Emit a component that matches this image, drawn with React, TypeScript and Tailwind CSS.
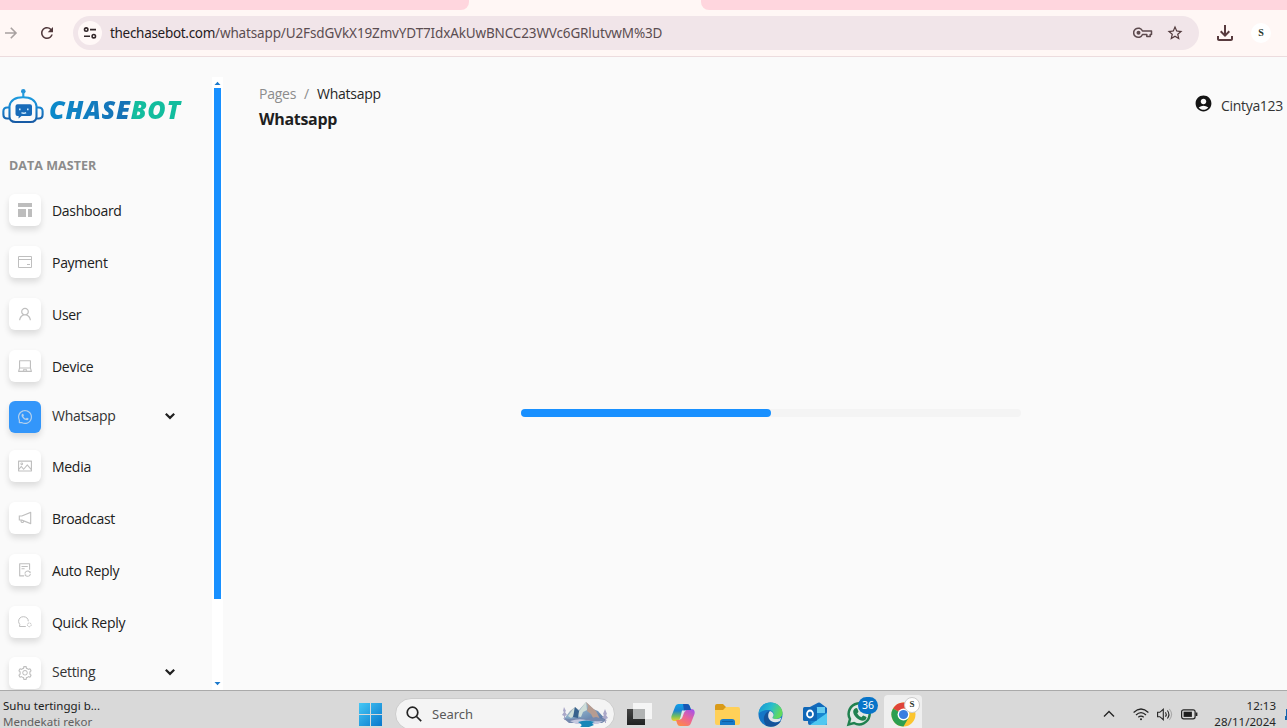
import type { ReactNode } from "react";
import {
  AiOutlineUser,
  AiOutlineLaptop,
  AiOutlineWhatsApp,
  AiOutlinePicture,
  AiOutlineNotification,
  AiOutlineFileSync,
  AiOutlineSetting,
} from "react-icons/ai";
import { MdAccountCircle, MdStarOutline, MdOutlineFileDownload, MdRefresh } from "react-icons/md";

function KeyIcon() {
  return (
    <svg className="ml-auto h-[12px] w-[20px]" viewBox="0 0 20 12" fill="none" stroke="#5d4a4e" strokeWidth="1.5">
      <path d="M9.500 4h9v3.500h-1.300v2h-3.400v-2H9.500A4.600 4.600 0 1 1 9.500 4Z" strokeLinejoin="round" />
      <circle cx="5.500" cy="5.800" r="2" fill="#5d4a4e" stroke="none" />
    </svg>
  );
}

function BrowserChrome() {
  return (
    <header className="flex h-[57px] shrink-0 flex-col border-b border-[#ecdcde] bg-[#fff7f5]">
      <div className="flex h-[10px] justify-between">
        <div className="w-[469px] rounded-br-[8px] bg-[#ffd6de]" />
        <div className="w-[586px] rounded-bl-[8px] bg-[#ffd6de]" />
      </div>
      <div className="flex h-[46px] items-center">
        <svg className="h-[14px] w-[18px] shrink-0" viewBox="0 0 18 14" fill="none" stroke="#a8a1a0" strokeWidth="1.6">
          <path d="M5 7h11M10.8 1.8 16 7l-5.2 5.2" />
        </svg>
        <MdRefresh className="ml-[20px] h-[18px] w-[18px] shrink-0 text-[#51393c]" />
        <div className="ml-[17px] flex h-[34px] w-[1126px] shrink-0 items-center rounded-full bg-[#f1e5e9] pl-[5px] pr-[15px]">
          <div className="flex h-6 w-6 items-center justify-center rounded-full bg-[#fff8f7]">
            <svg className="h-[14px] w-[14px]" viewBox="0 0 14 14" fill="none" stroke="#33282a" strokeWidth="1.6">
              <circle cx="3.2" cy="3.6" r="1.7" />
              <path d="M7 3.6h6M1 10.2h6" />
              <circle cx="10.8" cy="10.2" r="1.7" />
            </svg>
          </div>
          <p className="ml-[8px] w-[560px] whitespace-nowrap font-['Noto_Sans','Open_Sans',sans-serif] text-[13.5px] leading-[18px] tracking-[-0.14px] text-[#5b4d51]">
            <span className="tracking-[-0.3px] text-[#251b1e]">thechasebot.com</span>/whatsapp/U2FsdGVkX19ZmvYDT7IdxAkUwBNCC23WVc6GRlutvwM%3D
          </p>
          <KeyIcon />
          <MdStarOutline className="ml-[13px] h-[18px] w-[18px] text-[#51393c]" />
        </div>
        <MdOutlineFileDownload className="ml-[14px] h-[24px] w-[24px] shrink-0 text-[#583b3e]" />
        <div className="ml-[14px] flex h-5 w-5 shrink-0 items-center justify-center rounded-full bg-white pb-[2px] font-['Liberation_Serif',serif] text-[10px] font-bold text-[#28352b]">
          S
        </div>
      </div>
    </header>
  );
}

function Logo() {
  return (
    <div className="flex h-[37px] items-center">
      <svg className="h-[37px] w-[43px] shrink-0" viewBox="0 0 43 37" fill="none" stroke="url(#botBlue)" strokeWidth="2.1">
        <defs>
          <linearGradient id="botBlue" gradientUnits="userSpaceOnUse" x1="0" y1="0" x2="0" y2="36">
            <stop offset="0" stopColor="#22aee9" />
            <stop offset=".55" stopColor="#1784d0" />
            <stop offset="1" stopColor="#17559f" />
          </linearGradient>
        </defs>
        <circle cx="22.300" cy="3.300" r="2.300" fill="#2492d6" stroke="none" />
        <path d="M22.300 4v5" stroke="#249bdc" />
        <path d="M8.500 18C9.500 12.500 14.500 9.300 22 9.300s12.500 3.200 13.500 8.700v10.500q0 5.500-6 5.500H14.500q-6 0-6-5.500Z" />
        <path d="M8.500 19.500H6.200q-3.800 0-3.800 3.800v3.200q0 4 3.800 4h2.300M35.500 19.500h2.300q3.800 0 3.800 3.800v3.200q0 4-3.800 4h-2.300" />
        <path d="M16.500 16.300H29q2 0 2 2v7.700q0 2-2 2h-8.500l-3 2.500.2-2.500h-1.200q-2 0-2-2v-7.700q0-2 2-2Z" fill="#176bb9" stroke="none" />
        <path d="M18.800 20.500v1.800M26.800 20.500v1.800M20.500 24.700q2.300 1.300 4.600 0" stroke="#d4efff" strokeWidth="1.500" />
      </svg>
      <span className="ml-[5px] mt-[4px] w-[140px] bg-gradient-to-r from-[#0a8bcb] from-0% via-[#1670b5] via-57% to-[#12bd9e] to-60% bg-clip-text pr-[4px] font-['Open_Sans',sans-serif] text-[25px] font-extrabold italic leading-[34px] tracking-[0.7px] text-transparent">
        CHASEBOT
      </span>
    </div>
  );
}

function CardIcon() {
  return (
    <svg className="h-[12px] w-[14px]" viewBox="0 0 14 12" fill="none" stroke="#bfbfbf">
      <path d="M.5.500h13v11H.5zM.5 3.500h13M9 8.500h3" />
    </svg>
  );
}

function ChatSettingIcon() {
  return (
    <svg className="h-[12px] w-[14px]" viewBox="0 0 14 12" fill="none" stroke="#bfbfbf">
      <path d="M10.300 5.300C10.300 2.500 8.300.700 5.400.700S.600 2.600.600 5.300c0 1.300.5 2.300 1.200 3.100L1.500 10.500H7.800" />
      <circle cx="11.300" cy="8.800" r="1.900" strokeDasharray="1.500 .6" />
    </svg>
  );
}

type NavItem = { label: string; icon: ReactNode; row: string; text?: string; active?: boolean; open?: boolean };

const nav: NavItem[] = [
  {
    label: "Dashboard",
    row: "mb-5",
    icon: (
      <svg className="h-[14px] w-[14px]" viewBox="0 0 14 14" fill="#bdbdbd">
        <path d="M0 0h14v4H0zM0 6h8v8H0zM10 6h4v8h-4z" />
      </svg>
    ),
  },
  { label: "Payment", row: "mb-5", icon: <CardIcon /> },
  { label: "User", row: "mb-5", icon: <AiOutlineUser /> },
  { label: "Device", row: "mb-[19px]", icon: <AiOutlineLaptop /> },
  { label: "Whatsapp", row: "mb-[17px]", icon: <AiOutlineWhatsApp />, active: true, open: true, text: "pb-[3px] text-[#333]" },
  { label: "Media", row: "mb-5", icon: <AiOutlinePicture /> },
  { label: "Broadcast", row: "mb-5", icon: <AiOutlineNotification /> },
  { label: "Auto Reply", row: "mb-5", icon: <AiOutlineFileSync /> },
  { label: "Quick Reply", row: "mb-[19px]", icon: <ChatSettingIcon /> },
  { label: "Setting", row: "", icon: <AiOutlineSetting />, open: true, text: "pb-[3px] text-[#333]" },
];

function Sidebar() {
  return (
    <aside className="flex w-[212px] shrink-0 flex-col overflow-hidden pt-[31px]">
      <div className="pl-[1px]">
        <Logo />
      </div>
      <h6 className="ml-[9px] mt-[31px] h-[20px] text-[12.5px] font-bold leading-[20px] tracking-[0.05px] text-[#8c8c8c]">DATA MASTER</h6>
      <nav className="mt-[18px] flex flex-col pl-[9px]">
        {nav.map((item) => (
          <a key={item.label} className={"flex h-8 shrink-0 items-center " + item.row}>
            <span
              className={
                "flex h-8 w-8 items-center justify-center rounded-[6px] text-[16px] shadow-[0_4px_6px_rgba(0,0,0,0.12)] " +
                (item.active ? "bg-[#3396fa] text-[#b4d0ec]" : "bg-white text-[#bfbfbf]")
              }
            >
              {item.icon}
            </span>
            <span className={"ml-[11px] w-[111px] text-[14px] leading-[20px] tracking-[-0.29px] " + (item.text ?? "pt-[1px] text-[#202020]")}>
              {item.label}
            </span>
            {item.open && (
              <svg className="mb-[3px] ml-[2px] h-[8px] w-[10px]" viewBox="0 0 10 8" fill="none" stroke="#202020" strokeWidth="2.2">
                <path d="m.8 1.800 4.200 4.100 4.200-4.100" />
              </svg>
            )}
          </a>
        ))}
      </nav>
    </aside>
  );
}

function Scrollbar() {
  return (
    <div className="flex w-[11px] shrink-0 flex-col items-center pt-5">
      <div className="flex h-[613px] w-full flex-col items-center bg-white">
        <svg className="h-[11px] w-[7px] shrink-0" viewBox="0 0 7 11" fill="#1b79cc">
          <path d="M.5 8 3.500 4.700 6.500 8z" />
        </svg>
        <div className="h-[511px] w-[7px] shrink-0 bg-[#1890ff]" />
        <svg className="mt-auto h-[11px] w-[7px] shrink-0" viewBox="0 0 7 11" fill="#1b79cc">
          <path d="M.5 3h6L3.500 6.300z" />
        </svg>
      </div>
    </div>
  );
}

function MainContent() {
  return (
    <main className="flex min-w-0 flex-1 flex-col pl-9">
      <div className="flex h-[84px] justify-between">
        <div className="pt-[26px]">
          <div className="flex text-[14px] leading-[22px] tracking-[-0.25px] text-[#8c8c8c]">
            <span>Pages</span>
            <span className="mx-[8px]">/</span>
            <span className="text-[#262626]">Whatsapp</span>
          </div>
          <h1 className="mt-[3px] text-[16px] font-bold leading-[22px] tracking-[-0.3px] text-[#1f1f1f]">Whatsapp</h1>
        </div>
        <div className="mr-[4px] flex items-start pt-[37px]">
          <MdAccountCircle className="h-[19px] w-[19px] text-[#141414]" />
          <span className="ml-[8px] mt-[1px] text-[14px] leading-[22px] tracking-[-0.3px] text-[#333]">Cintya123</span>
        </div>
      </div>
      <div className="ml-[262px] mt-[268px] h-2 w-[500px] rounded-full bg-[#f4f4f4]">
        <div className="h-2 w-1/2 rounded-full bg-[#1890ff]" />
      </div>
    </main>
  );
}

function SearchArt() {
  return (
    <svg className="ml-auto h-[26px] w-[48px]" viewBox="0 0 48 26">
      <defs>
        <linearGradient id="peak" x1="0" y1="0" x2="1" y2="1">
          <stop offset="0" stopColor="#e9c8ad" />
          <stop offset=".45" stopColor="#8aacc7" />
          <stop offset="1" stopColor="#526fa0" />
        </linearGradient>
      </defs>
      <path d="M3 18 9 10l5-4 4 3 7-8 7 7 5 2 8 9z" fill="url(#peak)" />
      <path d="m15 15 4-6 6-8 1 8-4 2-2 5zM7 15l6-8 1 7-4 3z" fill="#ceded9" />
      <path d="m25 1 2 4-1 5 4 3 2 4 7 1-4-8z" fill="#b69c91" />
      <path d="m14 6 4 4-1 7-5-1z" fill="#36628d" />
      <path d="m2 17 7 1 9-1 8 1 9-2 11 3-5 3H8z" fill="#7589ae" />
      <path d="M9 20q9-3 16-1t17 1l-5 3H15z" fill="#c4c8df" />
      <path d="M17 21q8-3 17 0-5 1-1 3l-5 2h-9q4-2-2-5z" fill="#1687b8" />
      <path d="m3 6 2 4-1 1 2 3-2 1v4H3v-4l-2-1 2-3-1-1zM44 8l2 5-1 1 2 3-2 1v4h-1v-4l-3-1 2-3-1-1z" fill="#aaa8c8" />
    </svg>
  );
}

function CopilotIcon() {
  return (
    <svg className="h-6 w-6" viewBox="0 0 24 24">
      <defs>
        <linearGradient id="copA" x1="0" y1="0" x2="0" y2="1">
          <stop offset="0" stopColor="#12a0e8" />
          <stop offset=".4" stopColor="#1c84d0" />
          <stop offset=".72" stopColor="#74bf5c" />
          <stop offset="1" stopColor="#f0cf2d" />
        </linearGradient>
        <linearGradient id="copB" x1=".8" y1="0" x2=".2" y2="1">
          <stop offset="0" stopColor="#a653e8" />
          <stop offset=".5" stopColor="#ec6594" />
          <stop offset="1" stopColor="#ff8a45" />
        </linearGradient>
      </defs>
      <path d="M7.500 1H16q2 0 2.700 2L20 7h-4q-2 0-2.700 2L11 16q-.8 2-3 2H4Q-.5 18 .5 13L4 4q1-3 3.500-3Z" fill="url(#copA)" />
      <path d="M16.500 23H9q-2 0-2.700-2L5 17h3q2 0 2.700-2L13 8q.8-2 3-2h4q4.500 0 3.500 5L20 20q-1 3-3.500 3Z" fill="url(#copB)" />
      <path d="M12 1h4q2 0 2.700 2L20 7h-4q-2 0-2.700 2z" fill="#1857b4" />
      <path d="M11 7.500h4.500q-2 .5-2.600 2.500l-1.600 4.500q-.7 2-2.800 2H8q1-.5 1.500-2.500z" fill="#dde6ed" />
    </svg>
  );
}

function FolderIcon() {
  return (
    <svg className="h-6 w-[25px]" viewBox="0 0 25 24">
      <path d="M0 3q0-2 2-2h6l3 3h12v8H0z" fill="#d99a18" />
      <path d="M0 7h8l3-3h12q2 0 2 2v14q0 2-2 2H2q-2 0-2-2z" fill="#ffd058" />
      <path d="M5 22v-3q0-3 3-3h9q3 0 3 3v3z" fill="#1579c8" />
      <path d="M7 18h11v1H7z" fill="#0d5fa5" />
    </svg>
  );
}

function EdgeIcon() {
  return (
    <svg className="h-[25px] w-[25px]" viewBox="0 0 25 25">
      <defs>
        <linearGradient id="edgeTop" x1="0" y1="0" x2="1" y2=".35">
          <stop offset="0" stopColor="#1492d5" />
          <stop offset=".55" stopColor="#29bdcd" />
          <stop offset="1" stopColor="#62d95d" />
        </linearGradient>
      </defs>
      <circle cx="12.500" cy="12.500" r="12" fill="#1476c7" />
      <path d="M.5 12C1 4.500 6 .5 12.500.5 20 .5 25 6 24.500 11.500c-.4 4-4 5.500-7.500 5.500-2.500 0-3-1-2-2.500 2-3-.5-6.500-5-6.500-4.500 0-8.500 2-9.500 4Z" fill="url(#edgeTop)" />
      <path d="M8.500 24C3.500 18 6 10 12 9c-2 2-2.500 6 0 9 2.800 3.200 7 3 11 1-3 5-8.500 7-14.500 5Z" fill="#155399" />
      <path d="M12 9c3 1 4.500 3.500 3 5.500-.8 1.200-.5 2 .8 2.300 2.200.8 5.200 0 7.500-1.300L22 19c-4 2-8 1.700-10.500-1.500C9.500 15 10 11 12 9Z" fill="#e0e4e7" />
    </svg>
  );
}

function OutlookIcon() {
  return (
    <svg className="h-6 w-6" viewBox="0 0 24 24">
      <path d="M5 6 15 .8q1-.5 2 0L24 6v15q0 2-2 2H7q-2 0-2-2z" fill="#126abb" />
      <path d="M8 5h14v12H8z" fill="#1687d1" />
      <path d="M14 5h8v6h-8z" fill="#65cbef" />
      <path d="m6 12 9 5 9-7v12q0 1-1 1H8z" fill="#1684ce" />
      <path d="m7 23 17-12v10q0 2-2 2z" fill="#50c8f1" />
      <rect y="5" width="14" height="14" rx="1.500" fill="#0f67b7" />
      <ellipse cx="7" cy="12" rx="3" ry="3.500" fill="none" stroke="#fff" strokeWidth="1.800" />
    </svg>
  );
}

function WhatsAppIcon() {
  return (
    <svg className="h-[26px] w-[26px]" viewBox="0 0 26 26">
      <path d="M2.500 23.500 4 18A10.500 10.500 0 1 1 8 22Z" fill="#e2e9e4" stroke="#20814f" strokeWidth="2.500" />
      <path d="m8.300 8 1.700-1q1-.2 1.400.8l1 2.400q.2.800-.4 1.300l-.8.900q1.500 2.800 4.200 3.800l1.200-1.300q.5-.5 1.200-.2l2.200 1.100q.7.300.5 1.200-.8 2.800-3.500 2.800C12 19.500 7 14.500 7.200 10.500q0-1.500 1.100-2.500Z" fill="#20814f" />
    </svg>
  );
}

function ChromeIcon() {
  return (
    <svg className="h-[25px] w-[25px]" viewBox="0 0 24 24">
      <circle cx="12" cy="12" r="11.500" fill="#fbc52f" />
      <path d="M12 12 2 6.200A11.500 11.500 0 0 1 22 6.200L12 6.500z" fill="#df4439" />
      <path d="M2 6.200A11.500 11.500 0 0 0 12 23.500l5-8.700L12 12z" fill="#2c9f50" />
      <circle cx="12" cy="12" r="5.700" fill="#fff" />
      <circle cx="12" cy="12" r="4.400" fill="#397de0" />
    </svg>
  );
}

function Taskbar() {
  return (
    <footer className="flex h-[38px] shrink-0 overflow-hidden border-t border-[#aaa] bg-[#d9d9d9] font-['Noto_Sans','Open_Sans',sans-serif]">
      <div className="w-[359px] shrink-0 whitespace-nowrap pl-[3px] pt-[7px] text-[11.5px] leading-[16px]">
        <div className="tracking-[0.02px] text-[#202020]">Suhu tertinggi b...</div>
        <div className="text-[#606060]">Mendekati rekor</div>
      </div>
      <svg className="mt-[12px] h-[23px] w-[23px] shrink-0" viewBox="0 0 23 23">
        <defs>
          <linearGradient id="windowsBlue" x1="0" y1="0" x2="1" y2="1" gradientUnits="objectBoundingBox">
            <stop offset="0" stopColor="#46c8f5" />
            <stop offset="1" stopColor="#0877cc" />
          </linearGradient>
        </defs>
        <path d="M0 0h11v11H0zM12 0h11v11H12zM0 12h11v11H0zM12 12h11v11H12z" fill="url(#windowsBlue)" />
      </svg>
      <div className="ml-[13px] mt-[7px] flex h-[32px] w-[220px] shrink-0 items-center rounded-full border border-[#ccc] bg-[#f4f4f4] pl-[10px] pr-[5px]">
        <svg className="h-4 w-4" viewBox="0 0 16 16" fill="none" stroke="#242424" strokeWidth="1.700">
          <circle cx="6.500" cy="6.500" r="5.300" />
          <path d="m10.500 10.500 4.700 4.700" />
        </svg>
        <span className="ml-[10px] pt-[2px] text-[13px] text-[#595959]">Search</span>
        <SearchArt />
      </div>
      <div className="ml-[12px] mt-[12px] flex shrink-0">
        <svg className="h-6 w-[25px]" viewBox="0 0 25 24">
          <defs>
            <linearGradient id="paneDark" x1="0" y1="0" x2="0" y2="1">
              <stop offset="0" stopColor="#454545" />
              <stop offset="1" stopColor="#202222" />
            </linearGradient>
          </defs>
          <path d="M0 6h18v16H0z" fill="url(#paneDark)" />
          <path d="M6 0h19v16H6z" fill="#f5f5f5" />
          <path d="M6 6h12v10H6z" fill="#b1b3b3" />
        </svg>
        <div className="ml-[19px]"><CopilotIcon /></div>
        <div className="ml-[20px]"><FolderIcon /></div>
        <div className="-mt-px ml-[18px]"><EdgeIcon /></div>
        <div className="-mt-px ml-[20px]"><OutlookIcon /></div>
        <div className="relative -mt-[2px] ml-[19px]">
          <WhatsAppIcon />
          <span className="absolute -top-[4px] left-[12px] flex h-[17px] w-[20px] items-center justify-center rounded-full bg-[#0874c8] text-[10.5px] text-white">36</span>
        </div>
      </div>
      <div className="relative ml-[12px] mt-[4px] flex h-[37px] w-[38px] shrink-0 rounded-[4px] bg-[#efefef] pl-[7px] pt-[7px]">
        <ChromeIcon />
        <span className="absolute left-[20px] top-[2px] flex h-[16px] w-[16px] items-center justify-center rounded-full border border-[#ccc] bg-white font-['Liberation_Serif',serif] text-[9px] font-bold text-[#29332c]">S</span>
      </div>
      <div className="ml-auto flex shrink-0">
        <svg className="mt-[19px] h-[8px] w-[12px]" viewBox="0 0 12 8" fill="none" stroke="#252525" strokeWidth="1.400">
          <path d="m1 6.500 5-5 5 5" />
        </svg>
        <svg className="ml-[18px] mt-[17px] h-[13px] w-[16px]" viewBox="0 0 16 13" fill="none" stroke="#252525" strokeWidth="1.200">
          <path d="M.6 4.500q7.400-7 14.800 0M3 7q5-4.800 10 0M5.300 9.300q2.700-2.500 5.400 0" />
          <circle cx="8" cy="11.300" r="1" fill="#252525" stroke="none" />
        </svg>
        <svg className="ml-[8px] mt-[17px] h-[13px] w-[16px]" viewBox="0 0 16 13" fill="none" stroke="#252525" strokeWidth="1.100">
          <path d="M.6 4.300h2.200l3.500-3v10.400l-3.500-3H.6zM8.500 4.300q1.500 2.200 0 4.400M10.400 2.500q3 4 0 8" />
          <path d="M12.300 1q4.600 5.500 0 11" stroke="#aaa" />
        </svg>
        <svg className="ml-[8px] mt-[18px] h-[11px] w-[17px]" viewBox="0 0 17 11" fill="none" stroke="#252525" strokeWidth="1.200">
          <rect x=".6" y=".8" width="13.500" height="9" rx="2" />
          <path d="M15.500 3.500v3.500" strokeWidth="1.800" />
          <rect x="2.600" y="2.700" width="8.300" height="5.200" fill="#1e1e1e" stroke="none" />
        </svg>
        <div className="mt-[7px] w-[78px] whitespace-nowrap text-right text-[11.5px] leading-[16px] text-[#252525]">
          <div>12:13</div>
          <div className="tracking-[0.05px]">28/11/2024</div>
        </div>
        <svg className="ml-[9px] mt-[18px] h-[11px] w-[2px]" viewBox="0 0 2 11" fill="#1765ad">
          <path d="M1 0h1v11H0V7h1z" />
        </svg>
      </div>
    </footer>
  );
}

export default function App() {
  return (
    <div className="flex h-[728px] w-[1287px] flex-col overflow-hidden bg-[#fafafa] font-['Open_Sans','Noto_Sans',sans-serif]">
      <BrowserChrome />
      <div className="flex h-[633px] shrink-0">
        <Sidebar />
        <Scrollbar />
        <MainContent />
      </div>
      <Taskbar />
    </div>
  );
}
